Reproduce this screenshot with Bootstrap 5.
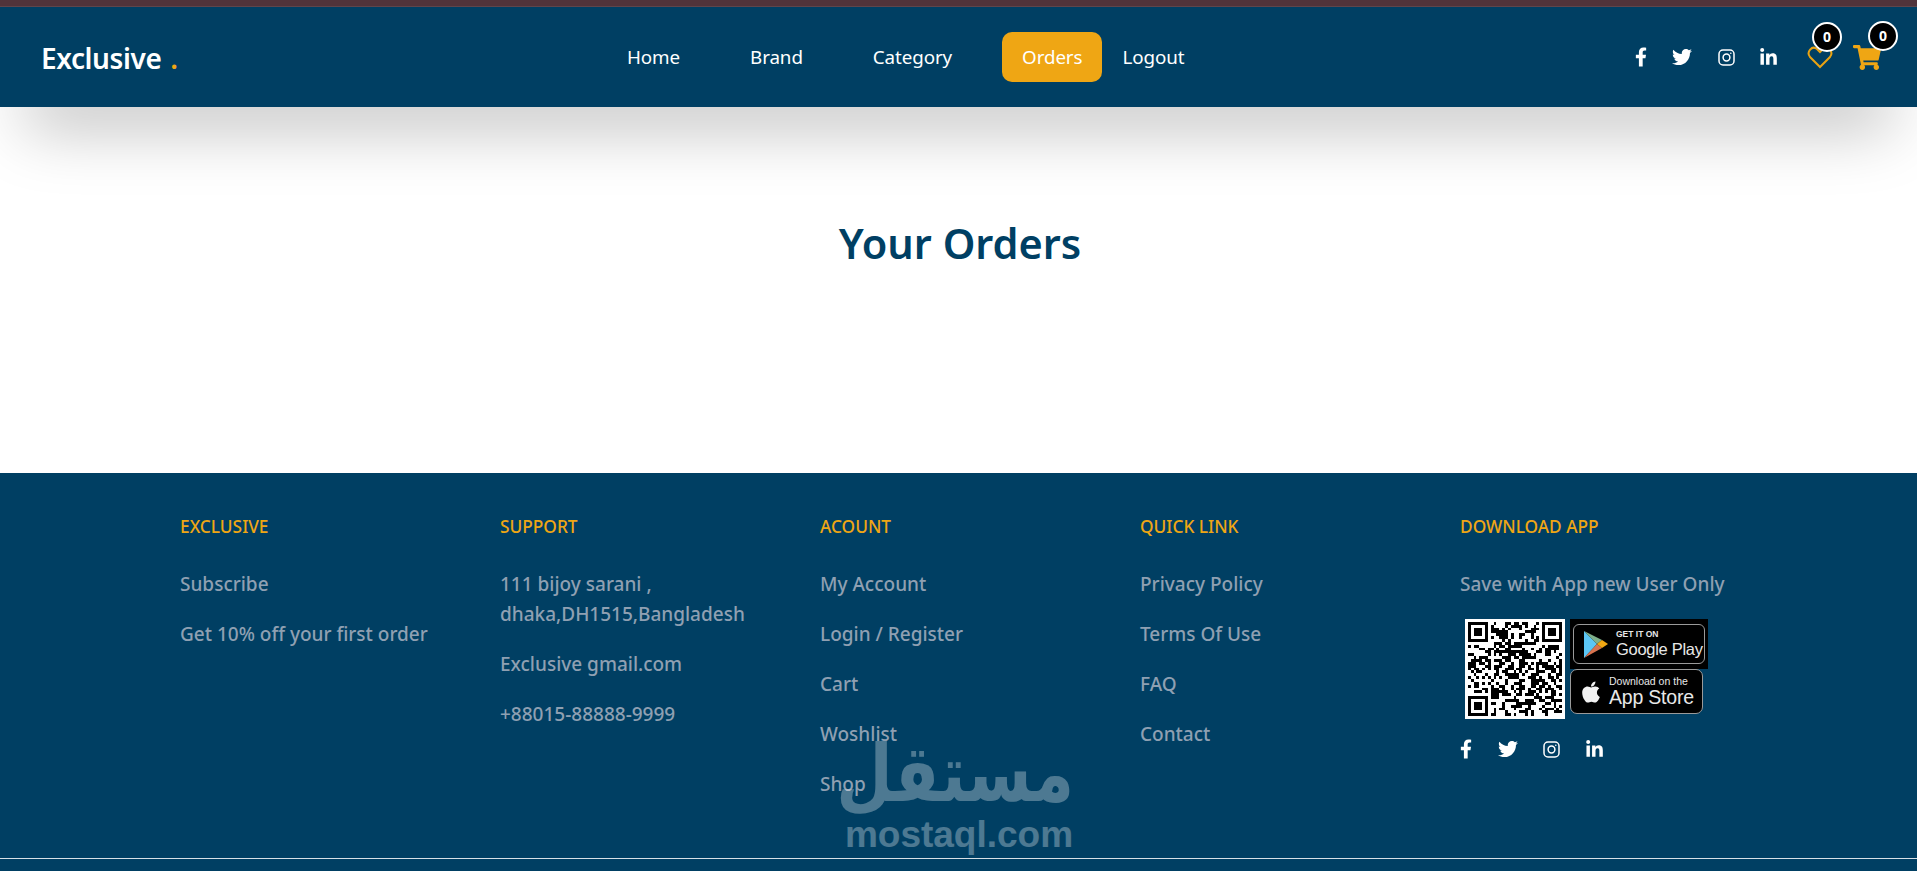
<!DOCTYPE html>
<html lang="en">
<head>
  <meta charset="UTF-8">
  <meta name="viewport" content="width=device-width, initial-scale=1.0">
  <title>Your Orders</title>
  <link href="https://cdn.jsdelivr.net/npm/bootstrap@5.3.0/dist/css/bootstrap.min.css" rel="stylesheet">
  <style>
    body { font-family: "Noto Sans", "Open Sans", sans-serif; background: #fff; min-height: 871px; overflow: hidden; }
    .top-strip { height: 7px; background: #50333a; border-bottom: 1px solid #5f454b; }
    .main-bar { height: 100px; background: #003f63; padding: 0 36px 0 41px; box-shadow: 0 45px 65px -25px rgba(0,0,0,.27); position: relative; z-index: 1; }
    .logo-box { width: 566px; font-size: 28px; font-weight: 600; color: #fff; letter-spacing: -.4px; padding-top: 2px; }
    .logo-box span { color: #efa614; margin-left: 2px; }
    .menu-link { display: block; color: #fff; text-decoration: none; font-size: 18.8px; padding: 0 20px; line-height: 50px; letter-spacing: -.1px; margin-right: 30px; }
    .menu-link.active-link { background: #efa614; border-radius: 10px; margin-right: 0; }
    .menu-link.last-link { margin-right: 0; }
    .social-row { gap: 25.5px; }
    .nav-social { margin-right: 14px; }
    .foot-social { margin-top: 20px; }
    .social-ic { fill: #fff; display: block; }
    .gold-ic { display: block; }
    .wish-box { margin-right: 20px; }
    .count-dot { position: absolute; width: 30px; height: 30px; top: -24px; left: 5px; background: #000; border: 2px solid #fff; border-radius: 50%; color: #fff; font-size: 14px; font-weight: 700; line-height: 26px; text-align: center; }
    .cart-dot { left: 15px; }
    .order-area { height: 366px; padding-top: 109px; }
    .order-title { font-size: 41.5px; font-weight: 600; color: #003f63; line-height: 54px; margin: 0; padding-left: 3px; }
    .foot-area { position: relative; height: 398px; background: #003f63; padding-top: 42px; }
    .foot-wrap { width: 1600px; margin-left: 168px; }
    .foot-head { font-size: 17.3px; font-weight: 500; color: #efa614; line-height: 24px; margin: 0 0 30px; }
    .foot-text { font-size: 19px; font-weight: 500; color: #8fa0b2; line-height: 30px; margin: 0 0 20px; white-space: nowrap; }
    .qr-box { width: 100px; height: 100px; background: #fff; margin: 0 5px; display: block; }
    .play-badge { width: 138px; height: 50px; background: #000; padding: 5px 3px; }
    .play-in { height: 40px; border: 1px solid #9a9a9a; border-radius: 6px; padding-left: 10px; color: #e8e8e8; font-family: "Liberation Sans", sans-serif; }
    .store-badge { width: 133px; height: 45px; background: #000; border: 1px solid #9a9a9a; border-radius: 7px; padding-left: 10px; color: #e8e8e8; font-family: "Liberation Sans", sans-serif; }
    .get-line { font-size: 8.5px; font-weight: 700; line-height: 10px; white-space: nowrap; }
    .play-line { font-size: 16.5px; line-height: 20px; letter-spacing: -.3px; white-space: nowrap; }
    .down-line { font-size: 10.5px; line-height: 11px; white-space: nowrap; }
    .store-line { font-size: 19.5px; line-height: 21px; letter-spacing: -.2px; white-space: nowrap; }
    .foot-rule { position: absolute; left: 0; right: 0; top: 385px; height: 1px; background: #d7e0e6; }
    .mark-box { position: absolute; left: 844px; top: 266px; width: 230px; color: #fff; opacity: .3; text-align: center; pointer-events: none; }
    .mark-ar { font-family: "DejaVu Sans", sans-serif; font-weight: 700; font-size: 65px; line-height: 78px; transform: scaleY(1.22); transform-origin: 50% 75%; }
    .mark-en { font-family: "Liberation Sans", sans-serif; font-weight: 700; font-size: 37px; line-height: 36px; white-space: nowrap; }
  </style>
</head>
<body>
  <div class="top-strip"></div>

  <nav class="main-bar d-flex align-items-center">
    <div class="logo-box">Exclusive <span>.</span></div>
    <a class="menu-link" href="#">Home</a>
    <a class="menu-link" href="#">Brand</a>
    <a class="menu-link" href="#">Category</a>
    <a class="menu-link active-link" href="#">Orders</a>
    <a class="menu-link last-link" href="#">Logout</a>

    <div class="ms-auto d-flex align-items-center">
      <div class="d-flex align-items-center social-row nav-social">
        <svg class="social-ic" width="12" height="20" viewBox="0 0 320 512"><path d="M279.14 288l14.22-92.66h-88.91v-60.13c0-25.35 12.42-50.06 52.24-50.06h40.42V6.26S260.43 0 225.36 0c-73.22 0-121.08 44.38-121.08 124.72v70.62H22.89V288h81.39v224h100.17V288z"/></svg>
        <svg class="social-ic" width="20" height="20" viewBox="0 0 512 512"><path d="M459.37 151.716c.325 4.548.325 9.097.325 13.645 0 138.72-105.583 298.558-298.558 298.558-59.452 0-114.68-17.219-161.137-47.106 8.447.974 16.568 1.299 25.34 1.299 49.055 0 94.213-16.568 130.274-44.832-46.132-.975-84.792-31.188-98.112-72.772 6.498.974 12.995 1.624 19.818 1.624 9.421 0 18.843-1.3 27.614-3.573-48.081-9.747-84.143-51.98-84.143-102.985v-1.299c13.969 7.797 30.214 12.67 47.431 13.319-28.264-18.843-46.781-51.005-46.781-87.391 0-19.492 5.197-37.36 14.294-52.954 51.655 63.675 129.3 105.258 216.365 109.807-1.624-7.797-2.599-15.918-2.599-24.04 0-57.828 46.782-104.934 104.934-104.934 30.213 0 57.502 12.67 76.67 33.137 23.715-4.548 46.456-13.32 66.599-25.34-7.798 24.366-24.366 44.833-46.132 57.827 21.117-2.273 41.584-8.122 60.426-16.243-14.292 20.791-32.161 39.308-52.628 54.253z"/></svg>
        <svg width="17" height="17" viewBox="0 0 17 17" class="gold-ic" fill="none" stroke="#fff" stroke-width="1.5"><rect x="1" y="1" width="15" height="15" rx="4"/><circle cx="8.5" cy="8.5" r="3.4"/><circle cx="12.8" cy="4.2" r=".8" fill="#fff" stroke="none"/></svg>
        <svg class="social-ic" width="17" height="19" viewBox="0 0 448 512"><path d="M100.28 448H7.4V148.9h92.88zM53.79 108.1C24.09 108.1 0 83.5 0 53.8a53.79 53.79 0 0 1 107.58 0c0 29.7-24.1 54.3-53.79 54.3zM447.9 448h-92.68V302.4c0-34.7-.7-79.2-48.29-79.2-48.29 0-55.69 37.7-55.69 76.7V448h-92.78V148.9h89.08v40.8h1.3c12.4-23.5 42.69-48.3 87.88-48.3 94 0 111.28 61.9 111.28 142.3V448z"/></svg>
      </div>
      <div class="position-relative ms-3 wish-box">
        <svg class="gold-ic" width="26" height="23" viewBox="0 0 26 23" fill="none" stroke="#e9a312" stroke-width="2"><path d="M13 21 3 11C-1 6 5 -1 10 3l3 3 3-3c5-4 11 3 7 8z"/></svg>
        <div class="count-dot">0</div>
      </div>
      <div class="position-relative">
        <svg width="28" height="25" viewBox="0 0 576 512" fill="#efa614" class="gold-ic"><path d="M528.12 301.319l47.273-208C578.806 78.301 567.391 64 551.99 64H159.208l-9.166-44.81C147.758 8.021 137.93 0 126.529 0H24C10.745 0 0 10.745 0 24v16c0 13.255 10.745 24 24 24h69.883l70.248 343.435C147.325 417.1 136 435.222 136 456c0 30.928 25.072 56 56 56s56-25.072 56-56c0-15.674-6.447-29.835-16.824-40h209.647C430.447 426.165 424 440.326 424 456c0 30.928 25.072 56 56 56s56-25.072 56-56c0-22.172-12.888-41.332-31.579-50.405l5.517-24.276c3.413-15.018-8.002-29.319-23.403-29.319H218.117l-6.545-32h293.145c11.206 0 20.92-7.754 23.403-18.681z"/></svg>
        <div class="count-dot cart-dot">0</div>
      </div>
    </div>
  </nav>

  <main class="order-area text-center">
    <h1 class="order-title">Your Orders</h1>
  </main>

  <footer class="foot-area">
    <div class="container-fluid foot-wrap">
      <div class="row row-cols-5">
        <div class="col">
          <h2 class="foot-head">EXCLUSIVE</h2>
          <p class="foot-text">Subscribe</p>
          <p class="foot-text">Get 10% off your first order</p>
        </div>
        <div class="col">
          <h2 class="foot-head">SUPPORT</h2>
          <p class="foot-text">111 bijoy sarani ,<br>dhaka,DH1515,Bangladesh</p>
          <p class="foot-text">Exclusive gmail.com</p>
          <p class="foot-text">+88015-88888-9999</p>
        </div>
        <div class="col">
          <h2 class="foot-head">ACOUNT</h2>
          <p class="foot-text">My Account</p>
          <p class="foot-text">Login / Register</p>
          <p class="foot-text">Cart</p>
          <p class="foot-text">Woshlist</p>
          <p class="foot-text">Shop</p>
        </div>
        <div class="col">
          <h2 class="foot-head">QUICK LINK</h2>
          <p class="foot-text">Privacy Policy</p>
          <p class="foot-text">Terms Of Use</p>
          <p class="foot-text">FAQ</p>
          <p class="foot-text">Contact</p>
        </div>
        <div class="col">
          <h2 class="foot-head">DOWNLOAD APP</h2>
          <p class="foot-text">Save with App new User Only</p>
          <div class="d-flex">
            <svg class="qr-box" id="qrCode" viewBox="0 0 35 35" shape-rendering="crispEdges"></svg>
            <div>
              <div class="play-badge">
                <div class="play-in d-flex align-items-center gap-2">
                  <svg width="24" height="27" viewBox="0 0 24 27"><path d="M0 0 13 13 0 27z" fill="#5bc6f5"/><path d="M0 0 18 9 13 13z" fill="#7fb08a"/><path d="M0 27 18 17 13 13z" fill="#d8734f"/><path d="M18 9 24 13 18 17 13 13z" fill="#f0a713"/></svg>
                  <div>
                    <div class="get-line">GET IT ON</div>
                    <div class="play-line">Google Play</div>
                  </div>
                </div>
              </div>
              <div class="store-badge d-flex align-items-center gap-2">
                <svg width="20" height="24" viewBox="0 0 384 512" fill="#f2f2f2"><path d="M318.7 268.7c-.2-36.7 16.4-64.4 50-84.8-18.8-26.9-47.2-41.7-84.7-44.6-35.5-2.8-74.3 20.7-88.5 20.7-15 0-49.4-19.7-76.4-19.7C63.3 141.2 4 184.8 4 273.5q0 39.3 14.4 81.2c12.8 36.7 59 126.7 107.2 125.2 25.2-.6 43-17.9 75.8-17.9 31.8 0 48.3 17.9 76.4 17.9 48.6-.7 90.4-82.5 102.6-119.3-65.2-30.7-61.7-90-61.7-91.9zm-56.6-164.2c27.3-32.4 24.8-61.9 24-72.5-24.1 1.4-52 16.4-67.9 34.9-17.5 19.8-27.8 44.3-25.6 71.9 26.1 2 49.9-11.4 69.5-34.3z"/></svg>
                <div>
                  <div class="down-line">Download on the</div>
                  <div class="store-line">App Store</div>
                </div>
              </div>
            </div>
          </div>
          <div class="d-flex align-items-center social-row foot-social">
            <svg class="social-ic" width="12" height="20" viewBox="0 0 320 512"><path d="M279.14 288l14.22-92.66h-88.91v-60.13c0-25.35 12.42-50.06 52.24-50.06h40.42V6.26S260.43 0 225.36 0c-73.22 0-121.08 44.38-121.08 124.72v70.62H22.89V288h81.39v224h100.17V288z"/></svg>
            <svg class="social-ic" width="20" height="20" viewBox="0 0 512 512"><path d="M459.37 151.716c.325 4.548.325 9.097.325 13.645 0 138.72-105.583 298.558-298.558 298.558-59.452 0-114.68-17.219-161.137-47.106 8.447.974 16.568 1.299 25.34 1.299 49.055 0 94.213-16.568 130.274-44.832-46.132-.975-84.792-31.188-98.112-72.772 6.498.974 12.995 1.624 19.818 1.624 9.421 0 18.843-1.3 27.614-3.573-48.081-9.747-84.143-51.98-84.143-102.985v-1.299c13.969 7.797 30.214 12.67 47.431 13.319-28.264-18.843-46.781-51.005-46.781-87.391 0-19.492 5.197-37.36 14.294-52.954 51.655 63.675 129.3 105.258 216.365 109.807-1.624-7.797-2.599-15.918-2.599-24.04 0-57.828 46.782-104.934 104.934-104.934 30.213 0 57.502 12.67 76.67 33.137 23.715-4.548 46.456-13.32 66.599-25.34-7.798 24.366-24.366 44.833-46.132 57.827 21.117-2.273 41.584-8.122 60.426-16.243-14.292 20.791-32.161 39.308-52.628 54.253z"/></svg>
            <svg width="17" height="17" viewBox="0 0 17 17" class="gold-ic" fill="none" stroke="#fff" stroke-width="1.5"><rect x="1" y="1" width="15" height="15" rx="4"/><circle cx="8.5" cy="8.5" r="3.4"/><circle cx="12.8" cy="4.2" r=".8" fill="#fff" stroke="none"/></svg>
            <svg class="social-ic" width="17" height="19" viewBox="0 0 448 512"><path d="M100.28 448H7.4V148.9h92.88zM53.79 108.1C24.09 108.1 0 83.5 0 53.8a53.79 53.79 0 0 1 107.58 0c0 29.7-24.1 54.3-53.79 54.3zM447.9 448h-92.68V302.4c0-34.7-.7-79.2-48.29-79.2-48.29 0-55.69 37.7-55.69 76.7V448h-92.78V148.9h89.08v40.8h1.3c12.4-23.5 42.69-48.3 87.88-48.3 94 0 111.28 61.9 111.28 142.3V448z"/></svg>
          </div>
        </div>
      </div>
    </div>
    <div class="foot-rule"></div>
    <div class="mark-box">
      <div class="mark-ar" dir="rtl">مستقل</div>
      <div class="mark-en">mostaql.com</div>
    </div>
  </footer>

  <script>
    // QR modules: three finder squares plus a fixed pseudo random fill
    const size = 33;
    const qr = document.getElementById('qrCode');
    let seed = 7;
    const next = () => (seed = (seed * 75 + 74) % 65537) / 65537;
    const inFinder = (x, y, ox, oy) => x >= ox - 1 && x <= ox + 7 && y >= oy - 1 && y <= oy + 7;
    let d = '';
    for (let y = 0; y < size; y++) {
      for (let x = 0; x < size; x++) {
        const finder = [[0, 0], [26, 0], [0, 26]].find(([ox, oy]) => inFinder(x, y, ox, oy));
        let on;
        if (finder) {
          const dx = x - finder[0], dy = y - finder[1];
          on = dx >= 0 && dx <= 6 && dy >= 0 && dy <= 6 &&
            (dx === 0 || dx === 6 || dy === 0 || dy === 6 || (dx >= 2 && dx <= 4 && dy >= 2 && dy <= 4));
        } else {
          on = next() > 0.5;
        }
        if (on) d += `M${x + 1} ${y + 1}h1v1h-1z`;
      }
    }
    qr.innerHTML = `<path d="${d}" fill="#000"/>`;
  </script>
  <script src="https://cdn.jsdelivr.net/npm/bootstrap@5.3.0/dist/js/bootstrap.bundle.min.js"></script>
</body>
</html>
